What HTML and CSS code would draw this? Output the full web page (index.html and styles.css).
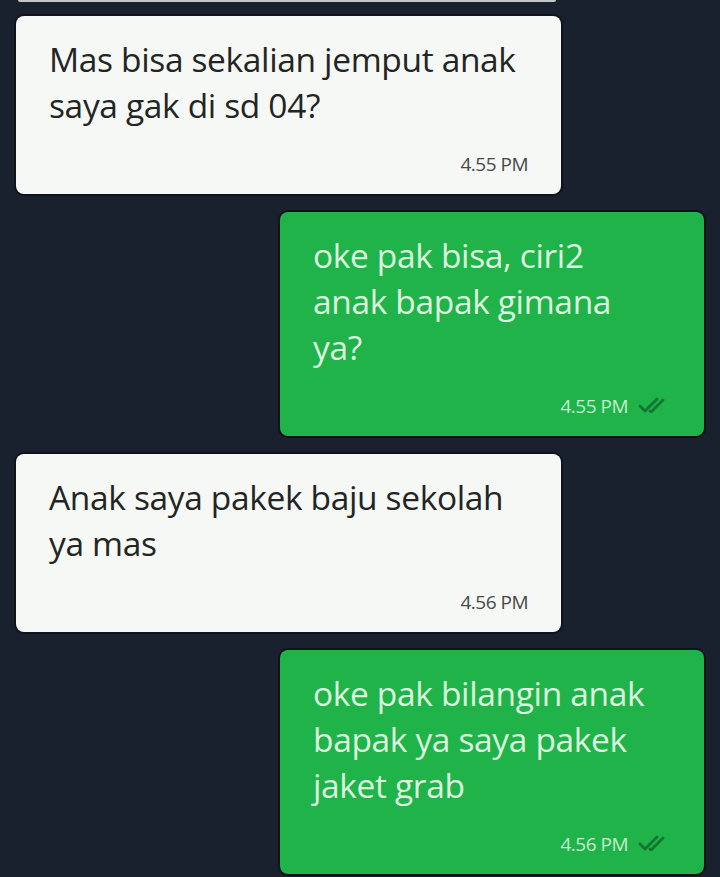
FILE: index.html
```html
<!DOCTYPE html>
<html lang="id">
<head>
<meta charset="utf-8">
<title>Chat</title>
<link rel="stylesheet" href="styles.css">
</head>
<body>
<div class="chat">
  <div class="prev-edge"></div>

  <div class="bubble in">
    <p class="text">Mas bisa sekalian jemput anak<br>saya gak di sd 04?</p>
    <div class="meta"><span class="time">4.55 PM</span></div>
  </div>

  <div class="bubble out">
    <p class="text">oke pak bisa, ciri2<br>anak bapak gimana<br>ya?</p>
    <div class="meta"><span class="time">4.55 PM</span>
      <svg class="ticks" width="34" height="16" viewBox="0 0 34 16"><path d="M2 9 L7 14 L19 2 M12 14 L13 15 L25 3" /></svg>
    </div>
  </div>

  <div class="bubble in">
    <p class="text">Anak saya pakek baju sekolah<br>ya mas</p>
    <div class="meta"><span class="time">4.56 PM</span></div>
  </div>

  <div class="bubble out">
    <p class="text">oke pak bilangin anak<br>bapak ya saya pakek<br>jaket grab</p>
    <div class="meta"><span class="time">4.56 PM</span>
      <svg class="ticks" width="34" height="16" viewBox="0 0 34 16"><path d="M2 9 L7 14 L19 2 M12 14 L13 15 L25 3" /></svg>
    </div>
  </div>
</div>
</body>
</html>
```
FILE: styles.css
```css
html, body {
  margin: 0;
  padding: 0;
  background: #19212e;
}
body {
  width: 720px;
  height: 877px;
  overflow: hidden;
  font-family: "Open Sans", "Liberation Sans", sans-serif;
}
.chat {
  display: flex;
  flex-direction: column;
  gap: 18px;
  padding: 0 16px;
}
.prev-edge {
  width: 538px;
  height: 2px;
  margin-left: 2px;
  margin-bottom: -4px;
  background: #c4c6c6;
  border-radius: 0 0 6px 6px;
}
.bubble {
  box-sizing: border-box;
  border-radius: 8px;
  padding: 20px 33px 20px 33px;
  box-shadow: 0 0 0 2px rgba(5, 8, 12, 0.55);
}
.bubble.in {
  align-self: flex-start;
  width: 545px;
  background: #f6f8f6;
  color: #232523;
}
.bubble.out {
  align-self: flex-end;
  width: 424px;
  padding-right: 32px;
  background: #1fb349;
  color: #dcf5df;
}
.text {
  margin: 0;
  font-size: 33.5px;
  font-weight: 500;
  line-height: 46px;
  letter-spacing: -0.35px;
  white-space: nowrap;
}
.meta {
  display: flex;
  justify-content: flex-end;
  align-items: center;
  gap: 10px;
  margin-top: 26px;
  height: 20px;
}
.time {
  font-size: 19px;
  line-height: 20px;
  letter-spacing: -0.5px;
}
.bubble.in .time {
  color: #474947;
}
.bubble.out .time {
  color: #c6eecd;
}
.ticks {
  display: block;
  margin-top: -2px;
}
.ticks path {
  fill: none;
  stroke: #117632;
  stroke-width: 2.8;
  stroke-linecap: round;
  stroke-linejoin: round;
}
```
